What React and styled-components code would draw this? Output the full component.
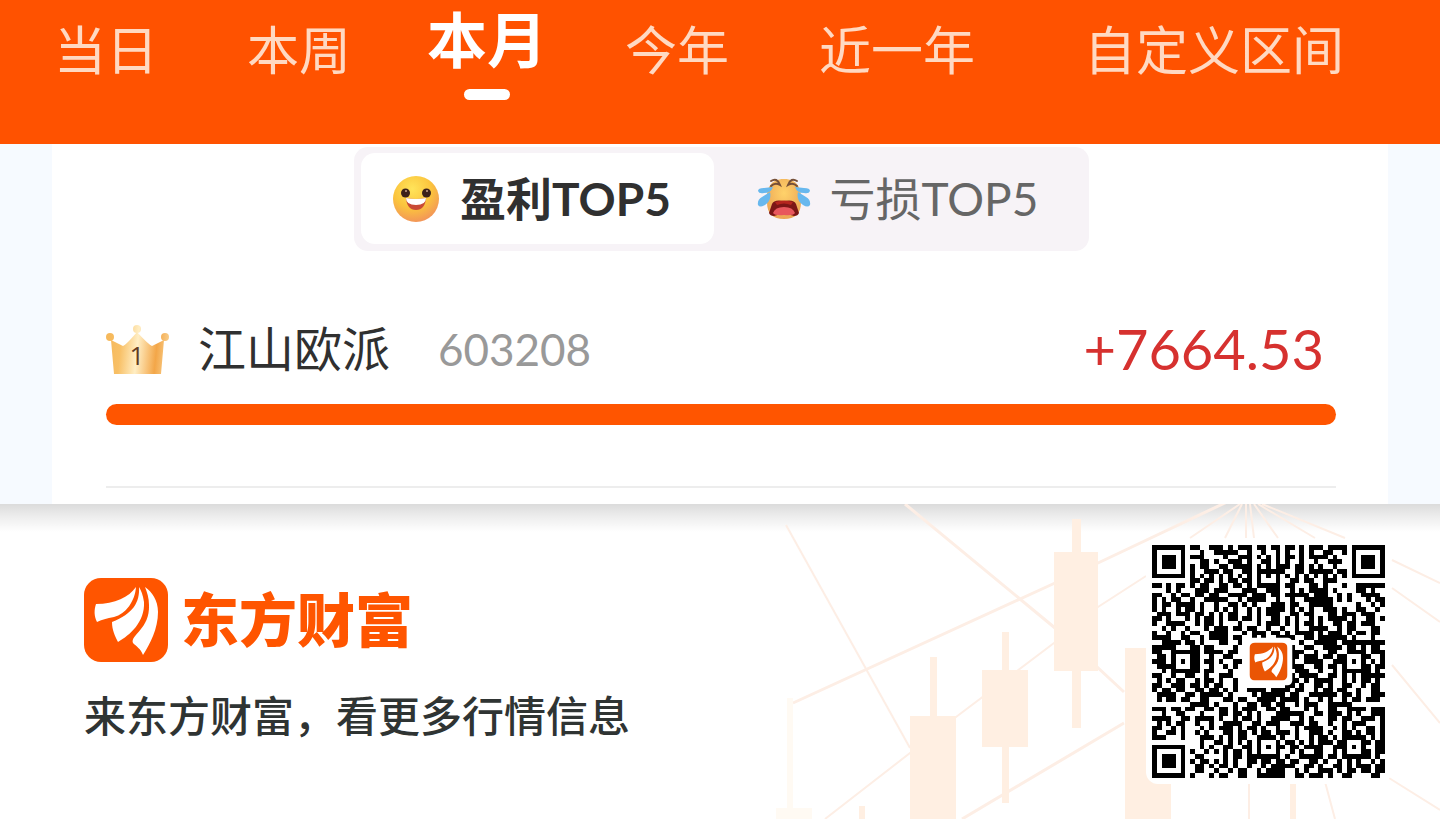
import React, { useState } from "react";
import styled, { createGlobalStyle } from "styled-components";

const GlobalStyle = createGlobalStyle`
  * {
    box-sizing: border-box;
  }

  body {
    margin: 0;
    background: #fff;
    font-family: Lato, "Noto Sans CJK SC", sans-serif;
  }

  button {
    font-family: inherit;
    border: 0;
    padding: 0;
    background: none;
    cursor: pointer;
  }
`;

const Page = styled.div`
  display: flex;
  flex-direction: column;
  min-height: 100vh;
  overflow: hidden;
`;

const PeriodNav = styled.nav`
  display: grid;
  grid-template-columns: 192fr 194fr 182fr 198fr 242fr 392fr;
  height: 144px;
  padding: 0 30px 0 10px;
  background: #ff5200;
`;

const PeriodTab = styled.button`
  display: flex;
  flex-direction: column;
  align-items: center;
  height: 104px;
  padding-top: ${(props) => (props.$active ? "0" : "8px")};
  color: ${(props) => (props.$active ? "#fff" : "#ffd9c2")};
  font-size: ${(props) => (props.$active ? "60px" : "52px")};
  font-weight: ${(props) => (props.$active ? 700 : 400)};
  line-height: ${(props) => (props.$active ? "80px" : "84px")};
  white-space: nowrap;
`;

const Indicator = styled.span`
  width: 46px;
  height: 11px;
  margin-top: 9px;
  border-radius: 6px;
  background: #fff;
`;

const Content = styled.main`
  padding: 0 52px;
  background: #f6faff;
`;

const Card = styled.section`
  display: flex;
  flex-direction: column;
  align-items: center;
  height: 360px;
  padding: 3px 52px 0 54px;
  background: #fff;
`;

const Switcher = styled.div`
  display: flex;
  padding: 6px 7px 7px;
  border-radius: 14px;
  background: #f7f3f7;
`;

const SwitchButton = styled.button`
  display: flex;
  align-items: center;
  justify-content: center;
  gap: 19px;
  width: ${(props) => (props.$active ? "353px" : "368px")};
  height: 91px;
  padding-right: ${(props) => (props.$active ? "12px" : "0")};
  border-radius: 14px;
  background: ${(props) => (props.$active ? "#fff" : "transparent")};
  color: ${(props) => (props.$active ? "#303030" : "#666")};
  font-size: 46px;
  font-weight: ${(props) => (props.$active ? 700 : 400)};
  line-height: 64px;
`;

const StockRow = styled.div`
  display: flex;
  align-items: center;
  align-self: stretch;
  height: 76px;
  margin-top: 60px;
  padding-right: 12px;
`;

const StockName = styled.span`
  margin-left: 26px;
  color: #303030;
  font-size: 48px;
  line-height: 64px;
`;

const StockCode = styled.span`
  margin-left: 48px;
  color: #999;
  font-size: 44px;
  line-height: 64px;
`;

const Profit = styled.span`
  margin-left: auto;
  color: #d6312f;
  font-size: 56px;
  line-height: 64px;
`;

const Track = styled.div`
  align-self: stretch;
  height: 21px;
  margin-top: 17px;
`;

const Fill = styled.div`
  height: 100%;
  border-radius: 11px;
  background: #ff5500;
`;

const Divider = styled.hr`
  align-self: stretch;
  width: 100%;
  height: 2px;
  margin: 61px 0 0;
  border: 0;
  background: #ededed;
`;

const Footer = styled.footer`
  position: relative;
  display: flex;
  flex: 1;
  align-items: flex-start;
  justify-content: space-between;
  min-height: 315px;
  padding: 35px 49px 0 84px;
  background: #fff;

  &::before {
    content: "";
    position: absolute;
    top: 0;
    left: 0;
    right: 0;
    height: 28px;
    background: linear-gradient(
      rgba(0, 0, 0, 0.14),
      rgba(0, 0, 0, 0.07) 45%,
      rgba(0, 0, 0, 0)
    );
  }
`;

const ChartBackdrop = styled.svg`
  position: absolute;
  top: 0;
  right: 0;
`;

const Brand = styled.div`
  position: relative;
  padding-top: 39px;
`;

const BrandLine = styled.div`
  display: flex;
  align-items: center;
  gap: 13px;
  height: 84px;
`;

const BrandName = styled.span`
  color: #ff5500;
  font-size: 58px;
  font-weight: 900;
  line-height: 84px;
`;

const Slogan = styled.p`
  margin: 22px 0 0;
  color: #2f3433;
  font-size: 42px;
  font-weight: 500;
  line-height: 64px;
`;

const QrFrame = styled.div`
  position: relative;
  padding: 6px;
  border-radius: 12px;
  background: #fff;

  svg {
    display: block;
  }
`;

const periods = ["当日", "本周", "本月", "今年", "近一年", "自定义区间"];

const stock = { name: "江山欧派", code: "603208", profit: "+7664.53", share: 100 };

const qrRows = [
  "#######.##..###.#.###.##.##.##.#.###.####.#######",
  "#.....#...#..#####..#..#..#.#..#.#..##..#.#.....#",
  "#.###.#.###....#..###.#.#.#.##.#.####.#...#.###.#",
  "#.###.#...##.#..###.#..##.#.#..#..#..###..#.###.#",
  "#.###.#.#.##..##.####.#.#.###.##.#.#..#...#.###.#",
  "#.....#.#..###.##..##.######..##.#####.##.#.....#",
  "#######.#.#.#.#.#.#.#.#.#.#.#.#.#.#.#.#.#.#######",
  "........##.##.#.##.##.#...#..##.##..###..........",
  "##.#.##.#.##..##.##.#.#####.##...##.#...#..######",
  "...#.#...###.###...###..###..#.#.####.#....##.#..",
  "##..#.##.##.##..####.###.##.#####.###..#.#..####.",
  "#.#.##..#..#####..#.####..#..#..######.#.#...#.##",
  "#.##.####.#..#..##.#.#...###.##..#####.....#..#.#",
  "#.#..#.##.#..#.#.#..#.#.####.#.#.#..###.#..##..#.",
  ".###.###.##.#.#.##..#.#.###..##.##...##.###.###..",
  "##.#...#.#.##.#.##.##.#..##.#.#..#.#.####.#..##.#",
  "#..####..#.##.#...#...#.###.#.#.##.#..##.##.###..",
  "..#.#..#...#.###.##.##..#..#..#..####..#.##...##.",
  "#..#..#.##..####...#.###.##.#.####.#.###.#.##.##.",
  "####..##..#.####.##..#.#..####..##.######.#...#..",
  "..####.##.#...##..#.......##...#..#####.#########",
  "#####...##.##....#..........##..##..####.##.#.##.",
  "##..######.####.##..........####..#..##..####.###",
  ".##.#...##..#..##............##.###.##.##...##..#",
  "###.#.#.##.##.#..##..........#..####..###.#.#.#.#",
  ".####...##..#..#.#..........####..##.##.#...##.##",
  "..#.######.##...#...........#.###..#..#.######.#.",
  "##..#..##..#..###............#.####..##.#.#.#####",
  ".#.#.##..#.##.#..#..........###.#.####..#.#.##.#.",
  "##..###.##.#.##..#..........##.#..##.#..##..#.##.",
  "#.##.##..##.##.#.#..####.####.##..#.##.##..#..##.",
  ".####..##.#####.#....#.#####.##..######.##.#..###",
  ".#.##.##..##...##.##..####.####.#..#.#..#.##.###.",
  "........####.#...#..##.##.##..#.###..#####.......",
  "###.##.##..##.##.#.###..##.##...#.#..##..####.###",
  "..#..##...#...##.##.#.#...######..##.###.#.#..###",
  "####..##.####.#..#.##.#..####..#.#...##.##..###.#",
  ".#.#.##..#..#..####..##.###..###.##..#..#.###...#",
  "##..#.#...#.#.###.#.##.#..#...#.####..#.#.#..##.#",
  "#..##.#..#.#...##.##.#.##.###.#..###.#..##.#.##.#",
  "###...#...###.#.#.##..####.#..#..#.##.#.#####.#.#",
  "..........#..##.#.#.#.#...#.##.#.#.###.##...##.##",
  "#######...#.#..##..##.#.#.##.##.####..###.#.#..##",
  "#.....#.#..#.#.#.##.#.#...#..#.#..##..#.#...##.##",
  "#.###.#..##....#.##.#######.#..#####.##.######.#.",
  "#.###.#.#.##.#.#.#..##.##.##.##..##.#..#.#.#..#.#",
  "#.###.#..##.#.##.#..#..#.#####..##.#..##.#.###.##",
  "#.....#..##..#..#.##..#.####..#.#..###.#.##.##.##",
  "#######.#...#.##..##..######..##.###.#..##....##.",
];

const qrPath = qrRows
  .map((row, y) =>
    [...row].map((cell, x) => (cell === "#" ? `M${x} ${y}h1v1h-1z` : "")).join("")
  )
  .join("");

const LogoPetals = () => (
  <g fill="#fff">
    <path d="M12 26C31 26 45 19 52 9C51 23 42 36 30 39C23 40 17 42 13 44C10 38 10 32 12 26Z" />
    <path d="M55 9C56 24 49 36 28 44C28 52 31 58 34 64C46 57 61 44 60 24C59 17 57 12 55 9Z" />
    <path d="M61 9C68 14 74 22 74 34C74 51 66 66 59 77C57 71 52 68 49 65C46 57 66 51 65 27C65 20 63 14 61 9Z" />
  </g>
);

const Logo = () => (
  <svg width="84" height="84" viewBox="0 0 84 84" aria-hidden="true">
    <rect width="84" height="84" rx="17" fill="#ff5500" />
    <LogoPetals />
  </svg>
);

const HappyFace = () => (
  <svg width="50" height="50" viewBox="0 0 50 50" aria-hidden="true">
    <defs>
      <radialGradient id="happy" cx="42%" cy="28%" r="75%">
        <stop offset="0" stopColor="#ffe45a" />
        <stop offset="0.55" stopColor="#fbc43d" />
        <stop offset="1" stopColor="#f2925a" />
      </radialGradient>
    </defs>
    <circle cx="25" cy="25" r="23" fill="url(#happy)" />
    <circle cx="14.5" cy="19" r="4.5" fill="#3c211a" />
    <circle cx="35.5" cy="19" r="4.5" fill="#3c211a" />
    <circle cx="15" cy="17" r="1" fill="#c6a18c" />
    <circle cx="36" cy="17" r="1" fill="#c6a18c" />
    <path d="M15 24Q25 26 35 24Q34 36 25 36Q16 36 15 24Z" fill="#c94a35" />
    <path d="M15 24Q25 26 35 24Q35 31 25 31Q15 31 15 24Z" fill="#fff" />
  </svg>
);

const CryingFace = () => (
  <svg width="54" height="50" viewBox="0 0 54 50" aria-hidden="true">
    <defs>
      <radialGradient id="crying" cx="50%" cy="35%" r="70%">
        <stop offset="0" stopColor="#ffd26a" />
        <stop offset="1" stopColor="#eaa153" />
      </radialGradient>
    </defs>
    <path
      d="M27 5C41 5 45 15 44 28C44 40 38 45 27 45C16 45 10 40 10 28C9 15 13 5 27 5Z"
      fill="url(#crying)"
    />
    <path
      d="M14 7Q20 3 23 11Q18 8 14 12M40 7Q34 3 31 11Q36 8 40 12"
      fill="none"
      stroke="#765039"
      strokeWidth="2"
      strokeLinecap="round"
    />
    <path
      d="M15 30Q17 25 27 27Q37 25 39 30L42 39Q41 42 37 42Q27 38 17 42Q13 42 12 39Z"
      fill="#7c1616"
    />
    <path d="M16 39Q18 33 27 33Q36 33 38 39Q36 42 27 41Q18 42 16 39Z" fill="#e8575d" />
    <path d="M18 28Q27 25 36 28L34 31Q27 28 20 31Z" fill="#b5251e" />
    <path
      d="M16 13Q14 19 7 19Q2 20 1 17Q1 14 7 14ZM13 18Q15 26 8 31Q3 34 1 31Q0 26 5 23ZM38 13Q40 19 47 19Q52 20 53 17Q53 14 47 14ZM41 18Q39 26 46 31Q51 34 53 31Q54 26 49 23Z"
      fill="#68b8ee"
    />
  </svg>
);

const Crown = () => (
  <svg width="66" height="56" viewBox="0 0 66 56" role="img" aria-label="第1名">
    <defs>
      <linearGradient
        id="crown"
        gradientUnits="userSpaceOnUse"
        x1="2"
        x2="62"
        y1="28"
        y2="34"
      >
        <stop offset="0" stopColor="#f6b95c" />
        <stop offset="0.2" stopColor="#f8c066" />
        <stop offset="0.48" stopColor="#ffeec4" />
        <stop offset="0.8" stopColor="#f3a648" />
        <stop offset="1" stopColor="#f9cf8c" />
      </linearGradient>
    </defs>
    <g fill="url(#crown)">
      <circle cx="4" cy="16" r="4" />
      <circle cx="31" cy="8" r="4" />
      <circle cx="59" cy="16" r="4" />
      <path d="M5 19L17 25Q20 24 31 11Q43 24 46 25L58 19L55 53H8Z" />
    </g>
    <text
      x="31"
      y="44"
      fill="#633b22"
      fontFamily="Open Sans"
      fontSize="26"
      textAnchor="middle"
    >
      1
    </text>
  </svg>
);

const ChartDrawing = () => (
  <ChartBackdrop width="680" height="315" viewBox="760 504 680 315" aria-hidden="true">
    <g fill="none" stroke="#fdeee5" strokeWidth="2">
      <path d="M905 504L1055 628L1124 692" strokeWidth="3" />
      <path d="M786 525L910 748" />
      <path d="M793 703L1055 583L1098 563L1248 492" strokeWidth="3" />
      <path d="M825 819L910 753L956 717L1054 643L1098 607L1146 576" />
      <path d="M962 819L1124 723" strokeWidth="3" />
      <path d="M1392 560L1440 583M1392 588L1440 622M1392 665L1440 723" />
      <path d="M1249 778V819M1324 778L1335 819M1389 778L1440 810" />
      <path d="M1240 504L1190 538M1242 504L1225 538M1246 504V538M1250 504L1254 538M1254 504L1278 538M1258 504L1315 538M1262 504L1345 538" />
    </g>
    <path d="M790 698V819" stroke="#fffaf3" strokeWidth="6" />
    <path d="M776 808H812V819H776Z" fill="#fffaf3" />
    <g fill="#ffefe2">
      <path d="M1072 519H1081V552H1098V671H1081V728H1072V671H1054V552H1072Z" />
      <path d="M1002 632H1009V670H1028V747H1009V803H1002V747H982V670H1002Z" />
      <path d="M930 657H937V716H956V819H910V716H930Z" />
      <path d="M1125 648H1171V819H1125ZM859 806H865V819H859ZM1290 778H1296V819H1290Z" />
    </g>
  </ChartBackdrop>
);

const QrCode = () => (
  <QrFrame>
    <svg width="233" height="233" viewBox="0 0 49 49" role="img" aria-label="二维码">
      <path d={qrPath} shapeRendering="crispEdges" />
      <rect x="19.5" y="19.5" width="10" height="10" rx="1" fill="#fff" />
      <svg x="20.5" y="20.5" width="8" height="8" viewBox="0 0 84 84">
        <rect width="84" height="84" rx="12" fill="#ea5504" />
        <LogoPetals />
      </svg>
    </svg>
  </QrFrame>
);

const App = () => {
  const [period, setPeriod] = useState("本月");
  const [board, setBoard] = useState("profit");

  return (
    <Page>
      <GlobalStyle />

      <PeriodNav>
        {periods.map((item) => (
          <PeriodTab
            key={item}
            type="button"
            $active={item === period}
            onClick={() => setPeriod(item)}
          >
            {item}
            {item === period && <Indicator />}
          </PeriodTab>
        ))}
      </PeriodNav>

      <Content>
        <Card>
          <Switcher>
            <SwitchButton
              type="button"
              $active={board === "profit"}
              onClick={() => setBoard("profit")}
            >
              <HappyFace />
              盈利TOP5
            </SwitchButton>
            <SwitchButton
              type="button"
              $active={board === "loss"}
              onClick={() => setBoard("loss")}
            >
              <CryingFace />
              亏损TOP5
            </SwitchButton>
          </Switcher>

          <StockRow>
            <Crown />
            <StockName>{stock.name}</StockName>
            <StockCode>{stock.code}</StockCode>
            <Profit>{stock.profit}</Profit>
          </StockRow>
          <Track>
            <Fill style={{ width: `${stock.share}%` }} />
          </Track>
          <Divider />
        </Card>
      </Content>

      <Footer>
        <ChartDrawing />
        <Brand>
          <BrandLine>
            <Logo />
            <BrandName>东方财富</BrandName>
          </BrandLine>
          <Slogan>来东方财富，看更多行情信息</Slogan>
        </Brand>
        <QrCode />
      </Footer>
    </Page>
  );
};

export default App;
